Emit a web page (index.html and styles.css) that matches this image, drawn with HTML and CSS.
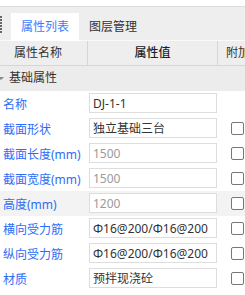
FILE: index.html
```html
<!DOCTYPE html>
<html lang="zh-CN">
<head>
  <meta charset="UTF-8">
  <title>属性列表</title>
  <link rel="stylesheet" href="styles.css">
</head>
<body>
  <div class="topbar"></div>

  <!-- tabs -->
  <div class="tabs">
    <span class="grip"></span>
    <div class="tab active">属性列表</div>
    <div class="tab">图层管理</div>
  </div>

  <!-- table header -->
  <div class="row head">
    <div class="cell name-col">属性名称</div>
    <div class="cell value-col">属性值</div>
    <div class="cell extra-col">附加</div>
  </div>

  <div class="group"><span class="caret"></span>基础属性</div>

  <div class="row">
    <div class="label">名称</div>
    <div class="field">DJ-1-1</div>
    <div class="check-cell"></div>
  </div>
  <div class="row">
    <div class="label">截面形状</div>
    <div class="field">独立基础三台</div>
    <div class="check-cell"><span class="check"></span></div>
  </div>
  <div class="row">
    <div class="label">截面长度(mm)</div>
    <div class="field muted">1500</div>
    <div class="check-cell"><span class="check"></span></div>
  </div>
  <div class="row">
    <div class="label">截面宽度(mm)</div>
    <div class="field muted">1500</div>
    <div class="check-cell"><span class="check"></span></div>
  </div>
  <div class="row hover">
    <div class="label">高度(mm)</div>
    <div class="field muted">1200</div>
    <div class="check-cell"><span class="check"></span></div>
  </div>
  <div class="row">
    <div class="label">横向受力筋</div>
    <div class="field">Φ16@200/Φ16@200</div>
    <div class="check-cell"><span class="check"></span></div>
  </div>
  <div class="row">
    <div class="label">纵向受力筋</div>
    <div class="field">Φ16@200/Φ16@200</div>
    <div class="check-cell"><span class="check"></span></div>
  </div>
  <div class="row">
    <div class="label">材质</div>
    <div class="field">预拌现浇砼</div>
    <div class="check-cell"><span class="check"></span></div>
  </div>
  <div class="row tail">
    <div class="label"></div>
    <div class="field"></div>
  </div>
</body>
</html>
```

FILE: styles.css
```css
body {
  margin: 0;
  width: 245px;
  height: 295px;
  overflow: hidden;
  background: #fff;
  font-family: "Noto Sans", "Noto Sans CJK SC", sans-serif;
  font-size: 12px;
  color: #333;
}

.topbar {
  height: 6px;
  background: #fff;
  border-bottom: 1px solid #dcdcdc;
}

/* ===== tabs ===== */
.tabs {
  position: relative;
  display: flex;
  height: 34px;
  padding: 6px 0 0 11px;
  box-sizing: border-box;
  background: #eeeeee;
  border-bottom: 1px solid #fafafa;
}

.grip {
  position: absolute;
  left: 0;
  top: 9px;
  width: 2px;
  height: 17px;
  background: repeating-linear-gradient(#666 0 2px, transparent 2px 3px);
}

.tab {
  width: 68px;
  height: 28px;
  line-height: 28px;
  text-align: center;
  color: #333;
}

.tab.active {
  background: #fff;
  color: #3b7bff;
}

/* ===== table ===== */
.row {
  display: grid;
  grid-template-columns: 88px 130px 27px;
  height: 25px;
  align-items: center;
}

.row.head {
  height: 24px;
  background: #eeeeee;
  border-bottom: 1px solid #d6d6d6;
}

.head .cell {
  height: 24px;
  line-height: 24px;
  border-right: 1px solid #d6d6d6;
  white-space: nowrap;
  overflow: hidden;
}

.name-col {
  padding-left: 14px;
}

.value-col {
  text-align: center;
  font-weight: 500;
  color: #222;
}

.extra-col {
  padding-left: 8px;
  color: #333;
  border-right: none !important;
}

.group {
  position: relative;
  height: 25px;
  line-height: 24px;
  padding-left: 9px;
  background: #ececec;
  color: #333;
}

.caret {
  position: absolute;
  left: -2px;
  top: 11px;
  border: 3px solid transparent;
  border-top: 3px solid #888;
}

.row.hover {
  background: #f3f3f3;
}

.label {
  padding-left: 3px;
  color: #2d6df6;
  white-space: nowrap;
}

.field {
  margin-left: 1px;
  height: 20px;
  line-height: 19px;
  padding-left: 3px;
  width: 128px;
  box-sizing: border-box;
  border: 1px solid #dddddd;
  background: #fff;
  white-space: nowrap;
  overflow: hidden;
  margin-top: -1px;
}

.field.muted {
  color: #9a9a9a;
}

.row.tail {
  height: 1px;
  overflow: hidden;
  align-items: start;
}

.tail .field {
  margin-top: 2px;
}

.check-cell {
  padding-left: 13px;
  height: 13px;
}

.check {
  display: block;
  width: 13px;
  height: 13px;
  box-sizing: border-box;
  border: 1px solid #777;
  border-radius: 2px;
  background: #fff;
}
```
